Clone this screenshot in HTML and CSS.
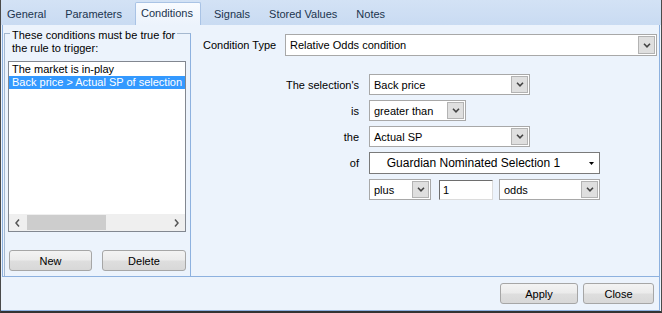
FILE: index.html
```html
<!DOCTYPE html>
<html lang="en">
<head>
    <meta charset="UTF-8">
    <title>Rule Conditions</title>
    <link rel="stylesheet" href="styles.css">
</head>
<body>
    <div class="window">
        <div class="tabs">
            <div class="tab">General</div>
            <div class="tab">Parameters</div>
            <div class="tab active">Conditions</div>
            <div class="tab">Signals</div>
            <div class="tab">Stored Values</div>
            <div class="tab">Notes</div>
        </div>

        <div class="page">
            <div class="rules">
                <div class="group">
                    <div class="group-title">These conditions must be true for<br>the rule to trigger:</div>
                    <div class="list">
                        <div class="list-items">
                            <div class="item">The market is in-play</div>
                            <div class="item selected">Back price &gt; Actual SP of selection 1</div>
                        </div>
                        <div class="hscroll">
                            <span class="sb-arrow">
                                <svg width="5" height="8" viewBox="0 0 5 8"><polyline points="4,0.5 1,4 4,7.5" fill="none" stroke="#555" stroke-width="1.5"/></svg>
                            </span>
                            <div class="sb-track"><div class="sb-thumb"></div></div>
                            <span class="sb-arrow">
                                <svg width="5" height="8" viewBox="0 0 5 8"><polyline points="1,0.5 4,4 1,7.5" fill="none" stroke="#555" stroke-width="1.5"/></svg>
                            </span>
                        </div>
                    </div>
                    <div class="group-buttons">
                        <button class="btn btn-new">New</button>
                        <button class="btn btn-delete">Delete</button>
                    </div>
                </div>
            </div>

            <div class="editor">
                <div class="type-row">
                    <span class="type-label">Condition Type</span>
                    <div class="combo combo-type">
                        <span class="combo-text">Relative Odds condition</span>
                        <span class="combo-arrow"><svg width="8" height="5" viewBox="0 0 8 5"><polyline points="1,0.8 4,3.8 7,0.8" fill="none" stroke="#444" stroke-width="1.6"/></svg></span>
                    </div>
                </div>

                <div class="form">
                    <span class="label">The selection's</span>
                    <div class="combo combo-sel">
                        <span class="combo-text">Back price</span>
                        <span class="combo-arrow"><svg width="8" height="5" viewBox="0 0 8 5"><polyline points="1,0.8 4,3.8 7,0.8" fill="none" stroke="#444" stroke-width="1.6"/></svg></span>
                    </div>

                    <span class="label">is</span>
                    <div class="combo combo-is">
                        <span class="combo-text">greater than</span>
                        <span class="combo-arrow"><svg width="8" height="5" viewBox="0 0 8 5"><polyline points="1,0.8 4,3.8 7,0.8" fill="none" stroke="#444" stroke-width="1.6"/></svg></span>
                    </div>

                    <span class="label">the</span>
                    <div class="combo combo-sel">
                        <span class="combo-text">Actual SP</span>
                        <span class="combo-arrow"><svg width="8" height="5" viewBox="0 0 8 5"><polyline points="1,0.8 4,3.8 7,0.8" fill="none" stroke="#444" stroke-width="1.6"/></svg></span>
                    </div>

                    <span class="label">of</span>
                    <div class="flat-combo">
                        <span class="flat-text">Guardian Nominated Selection 1</span>
                        <span class="flat-arrow"><svg width="5" height="3" viewBox="0 0 5 3"><polygon points="0,0 5,0 2.5,3" fill="#000"/></svg></span>
                    </div>

                    <span class="label"></span>
                    <div class="expr">
                        <div class="combo combo-plus">
                            <span class="combo-text">plus</span>
                            <span class="combo-arrow"><svg width="8" height="5" viewBox="0 0 8 5"><polyline points="1,0.8 4,3.8 7,0.8" fill="none" stroke="#444" stroke-width="1.6"/></svg></span>
                        </div>
                        <div class="textbox">1</div>
                        <div class="combo combo-odds">
                            <span class="combo-text">odds</span>
                            <span class="combo-arrow"><svg width="8" height="5" viewBox="0 0 8 5"><polyline points="1,0.8 4,3.8 7,0.8" fill="none" stroke="#444" stroke-width="1.6"/></svg></span>
                        </div>
                    </div>
                </div>
            </div>
        </div>

        <div class="footer">
            <button class="btn btn-apply">Apply</button>
            <button class="btn btn-close">Close</button>
        </div>
    </div>
</body>
</html>
```

FILE: styles.css
```css
* {
    box-sizing: border-box;
}
body {
    margin: 0;
    font-family: "Liberation Sans", Arial, sans-serif;
    font-size: 11px;
    color: #000;
    background-color: #ecf3fc;
}
.window {
    width: 662px;
    height: 313px;
    border-left: 1px solid #4a4a4a;
    border-right: 1px solid #4a4a4a;
    border-bottom: 2px solid #333;
    background-color: #ecf3fc;
    display: flex;
    flex-direction: column;
}

/* tab strip */
.tabs {
    height: 25px;
    flex: none;
    background: linear-gradient(#d3e2f5, #c9dbf2);
    display: flex;
    align-items: flex-end;
}
.tab {
    height: 21px;
    padding: 4px 6px 0;
    margin-right: 7px;
    line-height: 13px;
    color: #20344e;
    white-space: nowrap;
}
.tab.active {
    height: 23px;
    padding: 4px 7px 0 5px;
    background: linear-gradient(#f8fbff, #ecf3fc);
    border: 1px solid #a9c3e5;
    border-bottom: none;
    border-radius: 2px 2px 0 0;
}

/* tab page */
.page {
    height: 252px;
    flex: none;
    margin: 0 1px;
    border: 1px solid #8db1df;
    border-top: none;
    display: flex;
}
.rules {
    width: 188px;
    padding: 8px 0 0 1px;
    display: flex;
    flex-direction: column;
}
.group {
    flex: 1;
    border: 1px solid #a5b8cf;
    border-right-color: #8db1df;
    border-bottom: none;
    padding: 0 4px 0 3px;
}
.group-title {
    width: fit-content;
    margin: -5px 0 0 2px;
    padding: 0 2px;
    line-height: 13px;
    white-space: nowrap;
    background-color: #ecf3fc;
}
.list {
    margin-top: 6px;
    width: 178px;
    height: 171px;
    border: 1px solid #828790;
    background-color: #fff;
    display: flex;
    flex-direction: column;
}
.list-items {
    flex: 1;
    padding-top: 1px;
    overflow: hidden;
}
.item {
    height: 13px;
    line-height: 13px;
    padding-left: 3px;
    white-space: nowrap;
}
.item.selected {
    background-color: #3399ff;
    color: #fff;
}
.hscroll {
    height: 17px;
    display: flex;
    background-color: #efefef;
}
.sb-arrow {
    width: 17px;
    display: flex;
    align-items: center;
    justify-content: center;
}
.sb-track {
    flex: 1;
    padding: 1px 0;
}
.sb-thumb {
    width: 79px;
    height: 15px;
    margin-left: 1px;
    background-color: #cdcdcd;
}
.group-buttons {
    display: flex;
    gap: 10px;
    margin-top: 18px;
    padding-left: 1px;
}

/* buttons */
.btn {
    font: inherit;
    color: #000;
    height: 21px;
    padding: 0;
    border: 1px solid #a6a6a6;
    border-radius: 3px;
    background: linear-gradient(#f3f3f3, #ebebeb 48%, #dedede 52%, #d8d8d8);
}
.btn-new {
    width: 83px;
}
.btn-delete {
    width: 84px;
}
.btn-apply {
    width: 78px;
}
.btn-close {
    width: 71px;
}

/* editor side */
.editor {
    flex: 1;
    padding: 9px 0 0 12px;
}
.type-row {
    display: flex;
    align-items: center;
    gap: 8px;
}
.type-label {
    width: 74px;
    white-space: nowrap;
}
.combo {
    height: 21px;
    border: 1px solid #a8a8a8;
    background-color: #fff;
    display: flex;
    align-items: center;
    padding-left: 4px;
}
.combo-text {
    flex: 1;
    white-space: nowrap;
}
.combo-arrow {
    width: 17px;
    align-self: stretch;
    margin: 1px;
    border: 1px solid #b3b3b3;
    background-color: #dfdfdf;
    display: flex;
    align-items: center;
    justify-content: center;
}
.combo-type {
    width: 372px;
    height: 22px;
}
.form {
    display: grid;
    grid-template-columns: 156px auto;
    column-gap: 10px;
    row-gap: 5px;
    margin-top: 18px;
    justify-items: start;
    align-items: center;
}
.label {
    justify-self: end;
    white-space: nowrap;
}
.combo-sel {
    width: 161px;
}
.combo-is {
    width: 97px;
}
.flat-combo {
    width: 231px;
    height: 22px;
    border: 1px solid #7a7a7a;
    background-color: #fff;
    display: flex;
    align-items: center;
    font-size: 12px;
}
.flat-text {
    flex: 1;
    text-align: center;
    white-space: nowrap;
}
.flat-arrow {
    width: 22px;
    display: flex;
    justify-content: flex-end;
    padding-right: 5px;
}
.expr {
    display: flex;
    align-items: center;
}
.combo-plus {
    width: 62px;
    margin-right: 8px;
}
.textbox {
    width: 54px;
    height: 20px;
    margin-right: 6px;
    padding-left: 3px;
    line-height: 18px;
    background-color: #fff;
    border: 1px solid;
    border-color: #6e6e6e #dcdcdc #dcdcdc #6e6e6e;
}
.combo-odds {
    width: 101px;
}

/* bottom bar */
.footer {
    flex: 1;
    margin-right: 1px;
    border-right: 1px solid #8db1df;
    border-bottom: 1px solid #8db1df;
    display: flex;
    justify-content: flex-end;
    align-items: flex-start;
    gap: 5px;
    padding: 6px 5px 0 0;
}
```
